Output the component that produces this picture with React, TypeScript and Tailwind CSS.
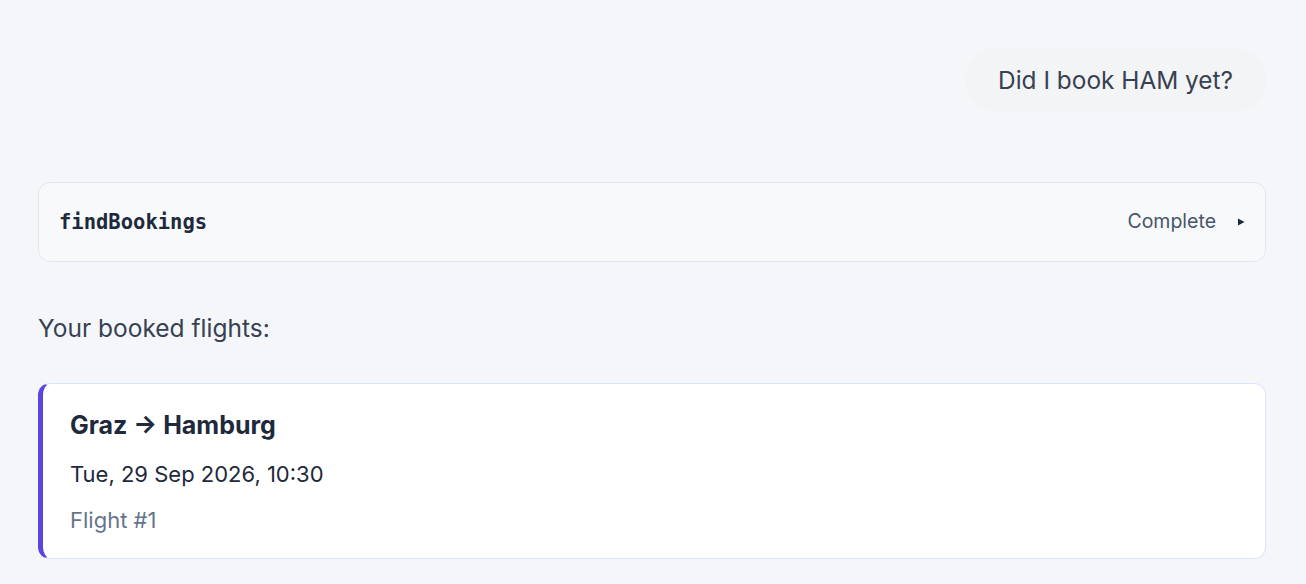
export default function App() {
  return (
    <div className="min-h-screen bg-[#f5f6fa] font-['Inter','Liberation_Sans',sans-serif] text-[#334155]">
      <div className="flex flex-col pl-[38px] pr-[40px] pt-[48px]">
        <div className="flex justify-end">
          <div className="flex h-[64px] items-center rounded-full bg-[#f3f4f6] px-[33px] text-[24.4px] text-[#374151]">
            Did I book HAM yet?
          </div>
        </div>

        <div className="mt-[70px] flex h-[80px] items-center justify-between rounded-[12px] border border-[#e2e8f0] bg-[#f8f9fb] pl-[20px] pr-[19px]">
          <span className="font-['DejaVu_Sans_Mono','Liberation_Mono',monospace] text-[20.5px] font-bold text-[#1e293b]">
            findBookings
          </span>
          <div className="flex items-center gap-[20px]">
            <span className="text-[19.5px] text-[#475569]">Complete</span>
            <svg width="10" height="10" viewBox="0 0 10 10">
              <path d="M2 1.5 L8.5 5 L2 8.5 Z" fill="#1e293b" />
            </svg>
          </div>
        </div>

        <p className="mt-[52px] text-[24.5px] leading-[28px] text-[#374151]">Your booked flights:</p>

        <div className="mt-[41px] flex h-[176px] flex-col rounded-[12px] border border-l-[5px] border-[#dde3fb] border-l-[#5b45e0] bg-white pl-[27px] pt-[25px]">
          <div className="text-[25px] font-bold leading-[32px] text-[#1e293b]">Graz → Hamburg</div>
          <div className="mt-[19px] text-[22px] leading-[28px] text-[#1e293b]">Tue, 29 Sep 2026, 10:30</div>
          <div className="mt-[18px] text-[22px] leading-[28px] text-[#64748b]">Flight #1</div>
        </div>
      </div>
    </div>
  )
}
